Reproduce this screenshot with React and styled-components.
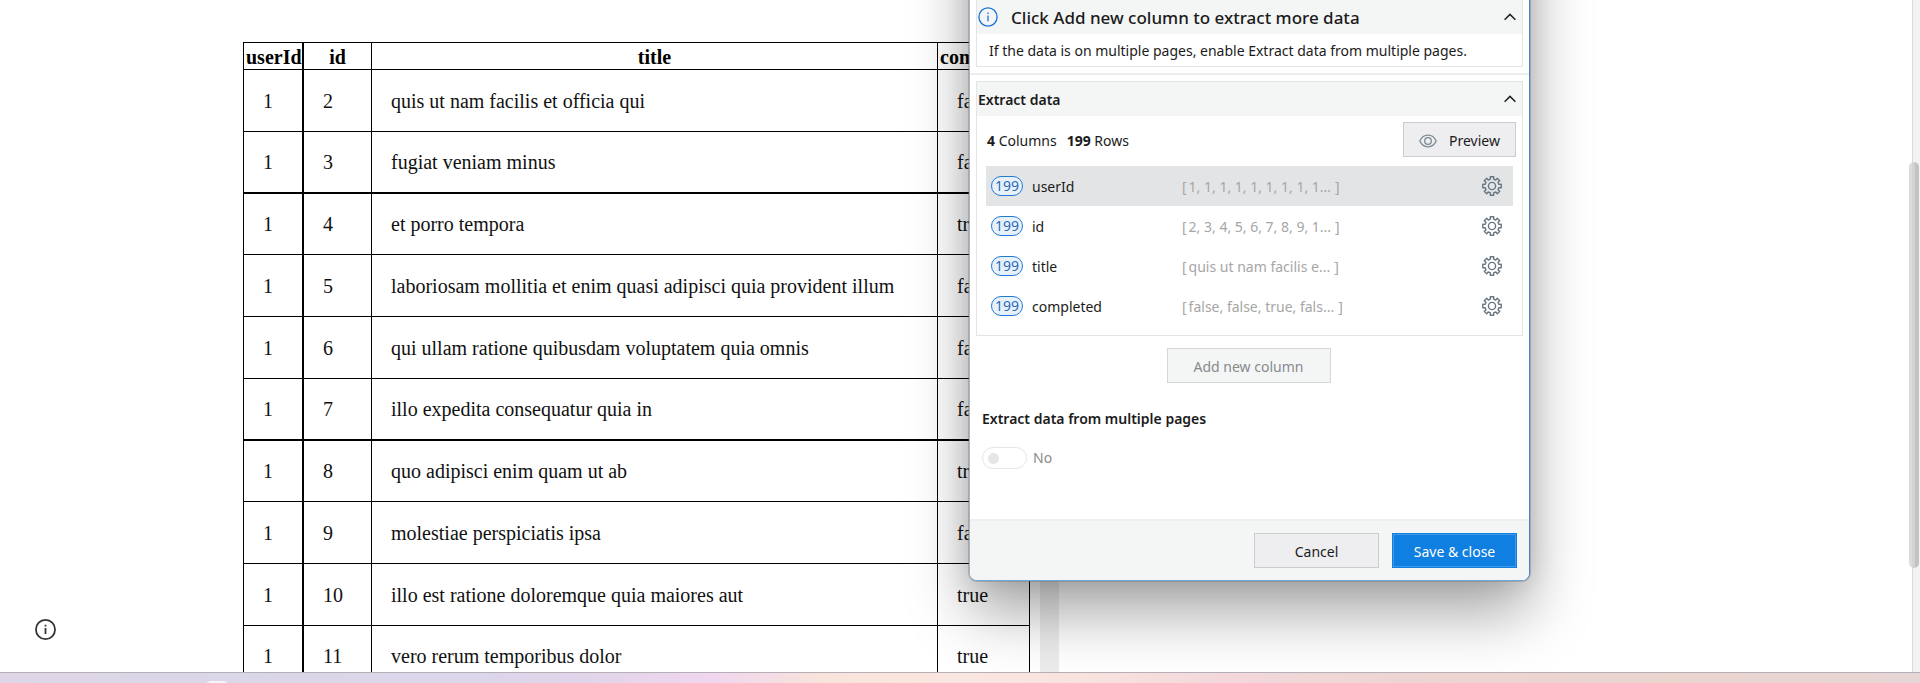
import React, { useState } from "react";
import styled, { createGlobalStyle, css } from "styled-components";

const GlobalStyle = createGlobalStyle`
  *, *::before, *::after { box-sizing: border-box; }
  body { margin: 0; background: #fff; }
  button, input { font: inherit; }
`;

const Screen = styled.div`
  display: flex;
  flex-direction: column;
  height: 100vh;
  overflow: hidden;
`;

const Desktop = styled.main`
  position: relative;
  flex: 1;
  min-height: 0;
  display: flex;
  overflow: hidden;
  background: #fff;
`;

const Wallpaper = styled.div`
  position: relative;
  flex: none;
  height: 11px;
  border-top: 1px solid #b5afb8;
  overflow: hidden;
  background: linear-gradient(
    90deg,
    #ded6e6 0%,
    #dad7e8 12%,
    #dcd6ea 25%,
    #e0d5ea 30%,
    #f0d6ef 37%,
    #f8e4da 43%,
    #fae6e0 50%,
    #f8e2de 57%,
    #f3d7db 64%,
    #edd5d2 75%,
    #ebd5cf 87%,
    #e6d5d5 100%
  );
`;

const TaskbarBump = styled.span`
  position: absolute;
  top: 8px;
  left: 205px;
  width: 24px;
  height: 12px;
  border-radius: 8px;
  background: #f6f4fa;
`;

/* ---------- web page behind the dialog ---------- */

const PagePane = styled.section`
  flex: none;
  padding: 42px 10px 0 243px;
  font-family: "Liberation Serif", "Times New Roman", serif;
  font-size: 20px;
  line-height: 24px;
  color: #000;
`;

const PaneGutter = styled.div`
  flex: none;
  width: 19px;
  background: #ececec;
`;

const DataTable = styled.table`
  width: 787px;
  table-layout: fixed;
  border-collapse: separate;
  border-spacing: 0;
`;

const Col = styled.col`
  width: ${(p) => p.$width}px;
`;

const cellLines = css`
  border-left: 1px solid #000;
  border-top: 1px solid #000;
  white-space: nowrap;
  &:nth-child(2) { border-left-width: 2px; }
  &:last-child { border-right: 1px solid #000; }
`;

const HeadCell = styled.th`
  ${cellLines}
  height: 27px;
  padding: 2px 2px 0;
  text-align: center;
  font-weight: 700;
`;

const Cell = styled.td`
  ${cellLines}
  height: ${(p) => (p.$short ? 61 : 62)}px;
  padding: 0 19px;
  border-top-width: ${(p) => (p.$heavy ? 2 : 1)}px;
  color: #111;
`;

const PageInfo = styled.button`
  position: absolute;
  left: 35px;
  bottom: 32px;
  width: 21px;
  height: 21px;
  padding: 0;
  border: 0;
  background: none;
  svg { display: block; }
`;

const ScrollTrack = styled.div`
  flex: none;
  width: 8px;
  margin-left: auto;
  border-left: 1px solid #dadada;
  background: #f3f3f3;
`;

const ScrollThumb = styled.div`
  width: 10px;
  height: 406px;
  margin: 162px 0 0 -4px;
  border-radius: 5px;
  background: linear-gradient(90deg, #dcdcdc 0 3px, #d3d3d3 3px 6px, #c2c2c2 6px);
`;

/* ---------- extraction dialog ---------- */

const Dialog = styled.section`
  position: absolute;
  top: -120px;
  left: 969px;
  width: 561px;
  padding-top: 119px;
  border: 1px solid;
  border-color: #4a84c4 #4a84c4 #6fa6dd #a8b3c5;
  border-radius: 8px;
  overflow: hidden;
  background: #fff;
  box-shadow: 0 0 0 1px rgba(110, 110, 110, 0.35), 0 32px 60px rgba(0, 0, 0, 0.35),
    0 0 24px rgba(0, 0, 0, 0.12);
  font-family: "Noto Sans", "Segoe UI", sans-serif;
  font-size: 14px;
  line-height: 20px;
  color: #1b1b1b;
`;

const Panel = styled.div`
  margin: 0 6px;
  border: 1px solid #e3e4e4;
  border-top-width: ${(p) => (p.$open ? 0 : 1)}px;
`;

const PanelHeader = styled.button`
  display: flex;
  align-items: center;
  width: 100%;
  height: 34px;
  padding: 0 6px 0 1px;
  border: 0;
  background: #f4f6f6;
  color: #1b1b1b;
  text-align: left;
  font-size: ${(p) => (p.$large ? 17 : 14)}px;
  font-weight: ${(p) => (p.$large ? 500 : 600)};
  svg { flex: none; }
`;

const PanelTitle = styled.span`
  flex: 1;
  padding-top: 2px;
  padding-left: ${(p) => (p.$afterIcon ? 13 : 0)}px;
  white-space: nowrap;
`;

const Hint = styled.p`
  margin: 0;
  padding: 7px 12px 5px;
  white-space: nowrap;
`;

const Divider = styled.hr`
  height: 2px;
  margin: 6px 0;
  border: 0;
  background: #ededee;
`;

const Summary = styled.div`
  display: flex;
  align-items: center;
  justify-content: space-between;
  padding: 6px 6px 9px 10px;
`;

const Counts = styled.div`
  display: flex;
  gap: 10px;
  padding-top: 2px;
`;

const Button = styled.button`
  display: inline-flex;
  align-items: center;
  justify-content: center;
  gap: 12px;
  width: ${(p) => p.$width}px;
  height: 35px;
  padding: 2px 0 0;
  border: 1px solid #cbccd0;
  background: #eeeef0;
  color: #1b1b1b;
  white-space: nowrap;
  ${(p) =>
    p.$primary &&
    css`
      border-color: #0f7fe2;
      background: #0f7fe2;
      box-shadow: inset 0 0 0 1px #3f98e8;
      color: #fff;
    `}
  &:disabled {
    border-color: #d6d7d7;
    background: #f4f6f6;
    color: #868a8d;
  }
`;

const ColumnList = styled.ul`
  margin: 0 9px 9px;
  padding: 0;
  list-style: none;
`;

const ColumnRow = styled.li`
  display: grid;
  grid-template-columns: 32px 141px 1fr 20px;
  align-items: center;
  column-gap: 9px;
  height: 40px;
  padding: 0 11px 0 5px;
  background: ${(p) => (p.$selected ? "#e3e4e5" : "transparent")};
`;

const Badge = styled.span`
  height: 20px;
  border: 1px solid #1f7ad8;
  border-radius: 10px;
  background: #e8f1fa;
  color: #2a6cb5;
  text-align: center;
  line-height: 17px;
`;

const ColumnName = styled.span`
  padding-top: 2px;
`;

const Sample = styled.span`
  display: flex;
  padding-top: 2px;
  color: #a6a6a6;
  white-space: nowrap;
`;

const SampleText = styled.span`
  padding: 0 4px 0 2px;
`;

const IconButton = styled.button`
  width: 20px;
  height: 20px;
  padding: 0;
  border: 0;
  background: none;
  color: #687783;
  svg { display: block; }
`;

const AddRow = styled.div`
  display: flex;
  justify-content: center;
  padding: 12px 2px 0 0;
`;

const Paging = styled.div`
  padding: 26px 12px 50px;
`;

const PagingTitle = styled.h2`
  margin: 0;
  font-size: 14px;
  line-height: 20px;
  font-weight: 600;
`;

const SwitchLabel = styled.label`
  display: flex;
  align-items: center;
  gap: 6px;
  height: 22px;
  margin-top: 18px;
  color: #8b8b8b;
`;

const Switch = styled.input`
  appearance: none;
  display: flex;
  align-items: center;
  width: 45px;
  height: 22px;
  margin: 0;
  padding: 0 5px;
  border: 1px solid #e6e6e6;
  border-radius: 11px;
  background: #fff;
  &::before {
    content: "";
    width: 11px;
    height: 11px;
    border-radius: 50%;
    background: #e6e6e6;
  }
`;

const Footer = styled.footer`
  display: flex;
  justify-content: flex-end;
  gap: 13px;
  padding: 12px;
  border-top: 2px solid #eeeff0;
  background: #f4f6f6;
`;

/* ---------- icons ---------- */

const InfoIcon = ({ size, color, stroke }) => (
  <svg width={size} height={size} viewBox="0 0 20 20" fill="none" stroke={color} strokeWidth={stroke} aria-hidden="true">
    <circle cx="10" cy="10" r="9.1" />
    <path d="M10 8.6v5.6M10 5.4v1.7" />
  </svg>
);

const Chevron = () => (
  <svg width="12" height="8" viewBox="0 0 12 8" fill="none" stroke="#222" strokeWidth="1.5" aria-hidden="true">
    <path d="M0.6 6.8L6 1.4l5.4 5.4" />
  </svg>
);

const EyeIcon = () => (
  <svg width="18" height="14" viewBox="0 0 18 14" fill="none" stroke="#7c8893" strokeWidth="1.3" aria-hidden="true">
    <path d="M0.8 7C2.6 3.2 5.5 1.2 9 1.2S15.400 3.200 17.200 7C15.400 10.800 12.500 12.800 9 12.800S2.600 10.800 0.800 7Z" />
    <circle cx="9" cy="7" r="3.3" />
  </svg>
);

const point = (r, deg) => {
  const a = (deg * Math.PI) / 180;
  return `${(10 + r * Math.sin(a)).toFixed(2)} ${(10 - r * Math.cos(a)).toFixed(2)}`;
};
const gearPath =
  "M" +
  Array.from({ length: 8 }, (_, i) => i * 45)
    .flatMap((d) => [point(7.1, d - 13), point(9.4, d - 10.5), point(9.4, d + 10.5), point(7.1, d + 13)])
    .join("L") +
  "Z";

const GearIcon = () => (
  <svg width="20" height="20" viewBox="0 0 20 20" fill="none" stroke="currentColor" strokeWidth="1.4" aria-hidden="true">
    <path d={gearPath} strokeLinejoin="round" />
    <circle cx="10" cy="10" r="3.6" />
  </svg>
);

/* ---------- data ---------- */

const records = [
  [1, 2, "quis ut nam facilis et officia qui", "false"],
  [1, 3, "fugiat veniam minus", "false"],
  [1, 4, "et porro tempora", "true"],
  [1, 5, "laboriosam mollitia et enim quasi adipisci quia provident illum", "false"],
  [1, 6, "qui ullam ratione quibusdam voluptatem quia omnis", "false"],
  [1, 7, "illo expedita consequatur quia in", "false"],
  [1, 8, "quo adipisci enim quam ut ab", "true"],
  [1, 9, "molestiae perspiciatis ipsa", "false"],
  [1, 10, "illo est ratione doloremque quia maiores aut", "true"],
  [1, 11, "vero rerum temporibus dolor", "true"],
];

const columns = [
  { name: "userId", sample: "1, 1, 1, 1, 1, 1, 1, 1, 1..." },
  { name: "id", sample: "2, 3, 4, 5, 6, 7, 8, 9, 1..." },
  { name: "title", sample: "quis ut nam facilis e..." },
  { name: "completed", sample: "false, false, true, fals..." },
];

const isHeavy = (i) => i % 4 === 2;

function RecordsTable() {
  return (
    <DataTable>
      <colgroup>
        <Col $width={59} />
        <Col $width={69} />
        <Col $width={566} />
        <Col $width={93} />
      </colgroup>
      <thead>
        <tr>
          {["userId", "id", "title", "completed"].map((h) => (
            <HeadCell key={h} scope="col">{h}</HeadCell>
          ))}
        </tr>
      </thead>
      <tbody>
        {records.map((record, i) => (
          <tr key={record[1]}>
            {record.map((value, c) => (
              <Cell key={c} $heavy={isHeavy(i)} $short={isHeavy(i + 1)}>{value}</Cell>
            ))}
          </tr>
        ))}
      </tbody>
    </DataTable>
  );
}

function ExtractDialog() {
  const [selected] = useState("userId");
  return (
    <Dialog role="dialog" aria-label="Extract data">
      <Panel $open>
        <PanelHeader $large type="button" aria-expanded="true">
          <InfoIcon size={20} color="#1473d6" stroke={1.3} />
          <PanelTitle $afterIcon>Click Add new column to extract more data</PanelTitle>
          <Chevron />
        </PanelHeader>
        <Hint>If the data is on multiple pages, enable Extract data from multiple pages.</Hint>
      </Panel>
      <Divider />
      <Panel>
        <PanelHeader type="button" aria-expanded="true">
          <PanelTitle>Extract data</PanelTitle>
          <Chevron />
        </PanelHeader>
        <Summary>
          <Counts>
            <span><b>4</b> Columns</span>
            <span><b>199</b> Rows</span>
          </Counts>
          <Button type="button" $width={113}>
            <EyeIcon />
            Preview
          </Button>
        </Summary>
        <ColumnList>
          {columns.map(({ name, sample }) => (
            <ColumnRow key={name} $selected={name === selected}>
              <Badge>199</Badge>
              <ColumnName>{name}</ColumnName>
              <Sample>
                [<SampleText>{sample}</SampleText>]
              </Sample>
              <IconButton type="button" aria-label={`${name} settings`}>
                <GearIcon />
              </IconButton>
            </ColumnRow>
          ))}
        </ColumnList>
      </Panel>
      <AddRow>
        <Button type="button" $width={164} disabled>Add new column</Button>
      </AddRow>
      <Paging>
        <PagingTitle>Extract data from multiple pages</PagingTitle>
        <SwitchLabel>
          <Switch type="checkbox" role="switch" disabled />
          No
        </SwitchLabel>
      </Paging>
      <Footer>
        <Button type="button" $width={125}>Cancel</Button>
        <Button type="button" $width={125} $primary>Save &amp; close</Button>
      </Footer>
    </Dialog>
  );
}

export default function App() {
  return (
    <Screen>
      <GlobalStyle />
      <Desktop>
        <PagePane>
          <RecordsTable />
        </PagePane>
        <PaneGutter />
        <ScrollTrack>
          <ScrollThumb />
        </ScrollTrack>
        <PageInfo type="button" aria-label="Page information">
          <InfoIcon size={21} color="#333" stroke={1.7} />
        </PageInfo>
        <ExtractDialog />
      </Desktop>
      <Wallpaper>
        <TaskbarBump />
      </Wallpaper>
    </Screen>
  );
}
